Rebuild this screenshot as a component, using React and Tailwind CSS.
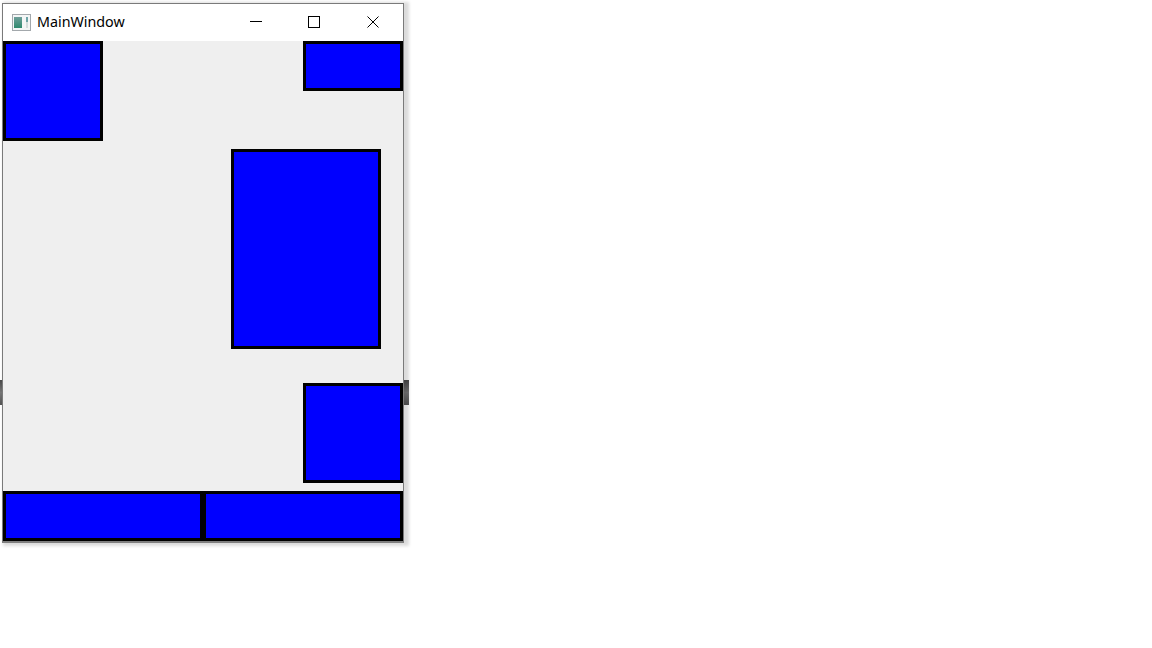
function Box({ className }) {
  return <div className={`box-border border-[3px] border-black bg-[#0000ff] ${className}`} />;
}

function AppIcon() {
  return (
    <svg width="20" height="18" viewBox="0 0 20 18" className="shrink-0">
      <rect x="0.5" y="0.5" width="18" height="16" fill="#f4f6f6" stroke="#a3a8ac" />
      <defs>
        <linearGradient id="pane" x1="0" y1="0" x2="0" y2="1">
          <stop offset="0" stopColor="#6f9f9a" />
          <stop offset="1" stopColor="#2f8a6e" />
        </linearGradient>
      </defs>
      <rect x="2" y="3" width="8" height="11" fill="url(#pane)" />
      <rect x="14" y="3" width="2" height="5" fill="#6fa5a8" />
      <rect x="14" y="8" width="2" height="6" fill="#d5dedd" />
    </svg>
  );
}

function TitleButton({ children }) {
  return <div className="flex h-full w-[58px] items-center justify-center pb-[2px]">{children}</div>;
}

export default function App() {
  return (
    <div className="relative h-[648px] w-[1152px] overflow-hidden bg-white pl-[2px] pt-[3px]">
      {/* window behind the main one, only its edges show */}
      <div className="absolute left-0 top-[380px] h-[25px] w-[409px] bg-gradient-to-b from-[#4a4a4a] via-[#777777] to-[#555555]" />

      <div className="relative box-border flex h-[540px] w-[402px] flex-col border border-b-[2px] border-[#7a7a7a] border-b-[#808080] bg-[#efefef] shadow-[3px_1px_3px_2px_rgba(0,0,0,0.14)]">
        <div className="flex h-[37px] shrink-0 items-center bg-white pl-[9px] font-['Noto_Sans',sans-serif] text-[14.3px] text-black">
          <AppIcon />
          <span className="ml-[5px] flex-1 pb-[2px]">MainWindow</span>
          <TitleButton>
            <svg width="12" height="12" viewBox="0 0 12 12">
              <path d="M0 5.5H12" stroke="#000" fill="none" />
            </svg>
          </TitleButton>
          <TitleButton>
            <svg width="12" height="12" viewBox="0 0 12 12">
              <rect x="0.5" y="0.5" width="11" height="11" stroke="#000" fill="none" />
            </svg>
          </TitleButton>
          <div className="w-[1px] shrink-0" />
          <TitleButton>
            <svg width="12" height="12" viewBox="0 0 12 12">
              <path d="M0.5 0.5L11.5 11.5M11.5 0.5L0.5 11.5" stroke="#000" fill="none" />
            </svg>
          </TitleButton>
          <div className="w-[1px] shrink-0" />
        </div>

        <div className="flex h-[500px] w-[400px] flex-col">
          <div className="flex h-[100px] items-start justify-between">
            <Box className="h-[100px] w-[100px]" />
            <Box className="h-[50px] w-[100px]" />
          </div>
          <Box className="ml-[228px] mt-2 h-[200px] w-[150px]" />
          <Box className="ml-[300px] mt-[34px] h-[100px] w-[100px]" />
          <div className="mt-2 flex">
            <Box className="h-[50px] w-[200px]" />
            <Box className="h-[50px] w-[200px]" />
          </div>
        </div>
      </div>
    </div>
  );
}
